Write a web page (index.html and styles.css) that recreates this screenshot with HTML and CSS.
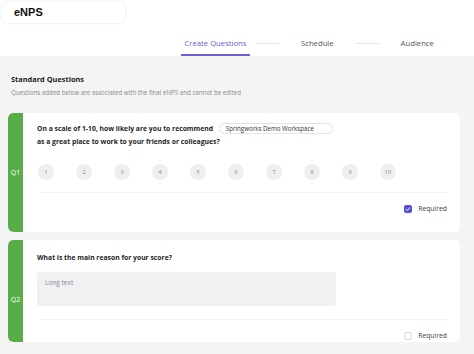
FILE: index.html
```html
<!DOCTYPE html>
<html>
<head>
<meta charset="utf-8">
<link rel="stylesheet" href="styles.css">
</head>
<body>
<header class="header">
  <div class="title-card">eNPS</div>
  <nav class="tabs">
    <div class="tab active">Create Questions</div>
    <div class="tab-line first"></div>
    <div class="tab">Schedule</div>
    <div class="tab-line"></div>
    <div class="tab">Audience</div>
  </nav>
</header>
<main class="main">
  <section class="intro">
    <h2 class="intro-title">Standard Questions</h2>
    <p class="intro-sub">Questions added below are associated with the final eNPS and cannot be edited</p>
  </section>

  <div class="card q1">
    <div class="strip"><span>Q1</span></div>
    <div class="card-body">
      <p class="question">On a scale of 1-10, how likely are you to recommend <span class="pill">Springworks Demo Workspace</span> as a great place to work to your friends or colleagues?</p>
      <div class="scale">
        <span class="dot">1</span><span class="dot">2</span><span class="dot">3</span><span class="dot">4</span><span class="dot">5</span><span class="dot">6</span><span class="dot">7</span><span class="dot">8</span><span class="dot">9</span><span class="dot">10</span>
      </div>
      <div class="divider"></div>
      <div class="req-row">
        <span class="check on"><svg width="6" height="6" viewBox="0 0 6 6"><path d="M1 3.2 L2.4 4.5 L5 1.5" fill="none" stroke="#fff" stroke-width="1"/></svg></span>
        <span class="req-label">Required</span>
      </div>
    </div>
  </div>

  <div class="card q2">
    <div class="strip"><span>Q2</span></div>
    <div class="card-body">
      <p class="question">What is the main reason for your score?</p>
      <div class="textarea">Long text</div>
      <div class="divider"></div>
      <div class="req-row">
        <span class="check"></span>
        <span class="req-label">Required</span>
      </div>
    </div>
  </div>
</main>
</body>
</html>
```
FILE: styles.css
```css
* { box-sizing: border-box; }
html, body { margin: 0; padding: 0; }
body {
  width: 474px;
  height: 354px;
  overflow: hidden;
  background: #f4f4f5;
  font-family: "Open Sans", sans-serif;
  color: #222;
}
.header {
  background: #fff;
  height: 56px;
  padding-top: 2px;
}
.title-card {
  margin-left: 2px;
  width: 123px;
  height: 21px;
  border-radius: 5px;
  background: #fff;
  box-shadow: 0 0 3px rgba(0,0,0,0.12);
  font-family: "Liberation Sans", Arial, sans-serif;
  font-weight: bold;
  font-size: 11px;
  line-height: 21px;
  padding-left: 12px;
  color: #111;
}
.tabs {
  display: flex;
  align-items: center;
  margin-top: 10px;
  height: 23px;
  padding-left: 181px;
}
.tab {
  font-size: 7.7px;
  color: #555;
  height: 23px;
  line-height: 20px;
}
.tab.active {
  color: #6a60d8;
  width: 69px;
  text-align: center;
  border-bottom: 2px solid #6a60d8;
}
.tab-line {
  width: 23px;
  height: 1px;
  background: #e2e2e6;
  margin: 0 22px 3px 22px;
}
.tab-line.first { margin-left: 6px; }
.main {
  padding: 0 14px 0 0;
}
.intro { padding: 18px 0 0 11px; height: 57px; }
.intro-title {
  margin: 0;
  font-size: 7.4px;
  font-weight: 700;
  color: #1b1b1b;
  line-height: 11px;
}
.intro-sub {
  margin: 3px 0 0;
  font-size: 6.2px;
  color: #8a8a8a;
  line-height: 9px;
}
.card {
  margin-left: 8px;
  width: 452px;
  background: #fff;
  border-radius: 5px;
  display: flex;
  overflow: hidden;
  margin-bottom: 8px;
}
.q1 { height: 119px; }
.q2 { height: 102px; }
.strip {
  width: 15px;
  background: #58ad47;
  color: #fff;
  font-size: 7px;
  text-align: center;
  padding-top: 54px;
  line-height: 11px;
  border-radius: 5px 0 0 5px;
}
.card-body {
  flex: 1;
  padding: 9px 13px 0 14px;
}
.question {
  margin: 0;
  font-size: 6.8px;
  font-weight: 700;
  color: #1e1e1e;
  line-height: 13px;
  width: 300px;
}
.pill {
  display: inline-block;
  width: 114px;
  height: 11px;
  line-height: 9px;
  margin-left: 4px;
  border: 1px solid #e3e3e6;
  border-radius: 6px;
  font-size: 6.2px;
  font-weight: 400;
  padding-left: 6px;
  color: #333;
  vertical-align: 0;
}
.scale {
  display: flex;
  gap: 22px;
  margin-top: 16px;
  padding-left: 1px;
}
.dot {
  width: 16px;
  height: 16px;
  border-radius: 50%;
  background: #efeff1;
  color: #888;
  font-size: 5.5px;
  display: flex;
  align-items: center;
  justify-content: center;
}
.divider {
  height: 1px;
  background: #f0f0f2;
  margin: 12px 0 0 3px;
}
.req-row {
  display: flex;
  justify-content: flex-end;
  align-items: center;
  gap: 6px;
  margin-top: 11px;
}
.check {
  width: 8px;
  height: 8px;
  border-radius: 2px;
  border: 1px solid #d8d8dc;
  display: flex;
  align-items: center;
  justify-content: center;
}
.check.on { background: #5551d8; border-color: #5551d8; }
.req-label { font-size: 6.8px; color: #444; }
.q2 .card-body { padding-top: 11px; }
.textarea {
  margin-top: 8px;
  width: 299px;
  height: 34px;
  background: #f1f1f4;
  border-radius: 3px;
  font-size: 6.5px;
  color: #888;
  padding: 6px 8px;
}
.q2 .divider { margin-top: 13px; }
.q2 .req-row { margin-top: 11px; }
```
